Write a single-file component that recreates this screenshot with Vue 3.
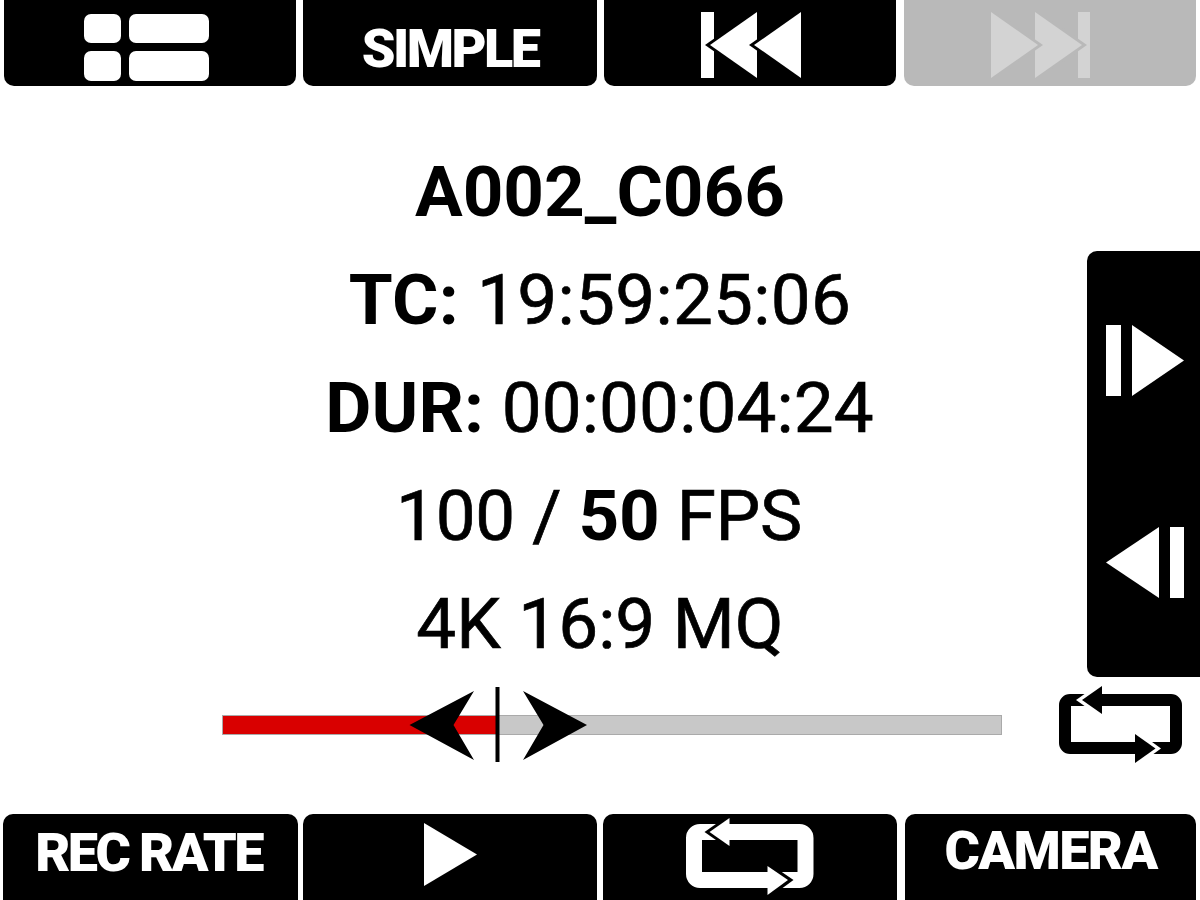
<script setup>
const progress = 35.2
</script>

<template>
  <div class="screen">
    <div class="top-row">
      <div class="btn top">
        <svg viewBox="4 0 292 86">
          <rect class="w" x="84" y="14" width="37" height="29" rx="7" />
          <rect class="w" x="129" y="14" width="80" height="29" rx="7" />
          <rect class="w" x="84" y="51" width="37" height="30" rx="7" />
          <rect class="w" x="129" y="51" width="80" height="30" rx="7" />
        </svg>
      </div>
      <div class="btn top label simple">SIMPLE</div>
      <div class="btn top">
        <svg viewBox="604 0 292 86">
          <rect class="w" x="701" y="12" width="13" height="66" />
          <polygon class="k" points="705,45 752,12 752,78" />
          <polygon class="w" points="710,45 757,12 757,78" />
          <polygon class="k" points="749,45 796,12 796,78" />
          <polygon class="w" points="754,45 801,12 801,78" />
        </svg>
      </div>
      <div class="btn top off">
        <svg viewBox="904 0 292 86">
          <rect class="d" x="1078" y="12" width="12" height="66" />
          <polygon class="g" points="1040,12 1087,45 1040,78" />
          <polygon class="d" points="1035,12 1082,45 1035,78" />
          <polygon class="g" points="996,12 1043,45 996,78" />
          <polygon class="d" points="991,12 1038,45 991,78" />
        </svg>
      </div>
    </div>

    <div class="middle">
      <div class="info">
        <div class="line"><b>A002_C066</b></div>
        <div class="line tc"><b>TC:</b> 19:59:25:06</div>
        <div class="line dur"><b>DUR:</b> 00:00:04:24</div>
        <div class="line fps">100 / <b>50</b> FPS</div>
        <div class="line">4K 16:9 MQ</div>
      </div>
      <div class="side">
        <svg viewBox="1087 251 113 426">
          <rect class="w" x="1106" y="325" width="15" height="71" />
          <polygon class="w" points="1132,325 1184,360.5 1132,396" />
          <polygon class="w" points="1106,562.5 1159,527 1159,598" />
          <rect class="w" x="1170" y="527" width="14" height="71" />
        </svg>
      </div>
    </div>

    <div class="scrub-row">
      <div class="track">
        <div class="fill" :style="{ width: progress + '%' }"></div>
        <svg class="thumb" viewBox="400 680 200 90">
          <polygon class="k" points="409.5,725 474,691 453.5,725 474,760" />
          <rect class="k" x="495.5" y="687" width="4" height="75" />
          <polygon class="k" points="523,691 587,725 523,760 543.5,725" />
        </svg>
      </div>
      <svg class="loop" viewBox="1059 684 124 80">
        <rect class="ring" x="1065" y="700" width="111" height="48" rx="5" />
        <polygon class="w" points="1076,700 1096,686 1096,714" />
        <polygon class="k" points="1082,700 1102,686 1102,714" />
        <polygon class="w" points="1161,748.5 1141,734 1141,763" />
        <polygon class="k" points="1155.5,748.5 1135,734 1135,763" />
      </svg>
    </div>

    <div class="bottom-row">
      <div class="btn bot label rec">REC RATE</div>
      <div class="btn bot">
        <svg viewBox="303 814 294 86">
          <polygon class="w" points="424,823 477,854.5 424,886" />
        </svg>
      </div>
      <div class="btn bot shift-a">
        <svg viewBox="603 814 294 86">
          <rect class="ring-w" x="694" y="832" width="111.5" height="48" rx="6" />
          <polygon class="k" points="704.5,832 724.5,818 724.5,846" />
          <polygon class="w" points="709.5,832 729.5,818 729.5,846" />
          <polygon class="k" points="793.5,880 773,866 773,895" />
          <polygon class="w" points="788,880 767.5,866 767.5,895" />
        </svg>
      </div>
      <div class="btn bot label camera shift-b">CAMERA</div>
    </div>
  </div>
</template>

<style>
html, body {
  margin: 0;
  background: #fff;
}
</style>

<style scoped>
.screen {
  width: 1200px;
  height: 900px;
  overflow: hidden;
  background: #fff;
  color: #000;
  font-family: Roboto, "Liberation Sans", sans-serif;
  display: flex;
  flex-direction: column;
}

.top-row {
  display: grid;
  grid-template-columns: 292px 294px 292px 293px;
  column-gap: 7px;
  padding-left: 4px;
  height: 86px;
}

.off {
  margin-left: 1px;
}

.bottom-row {
  display: grid;
  grid-template-columns: 295px 294px 295px 294px;
  column-gap: 5px;
  padding-left: 3px;
  height: 86px;
}

.shift-a {
  margin-left: 1px;
}

.shift-b {
  margin-left: 3px;
}

.btn {
  background: #000;
  color: #fff;
  overflow: hidden;
}

.off.btn {
  background: #b9b9b9;
}

.btn svg {
  display: block;
  width: 100%;
  height: 100%;
}

.top {
  border-radius: 0 0 10px 10px;
}

.bot {
  border-radius: 10px 10px 0 0;
}

.label {
  display: flex;
  justify-content: center;
  font-size: 54px;
  font-weight: 900;
  line-height: 60px;
}

.simple {
  padding-top: 19px;
  height: 67px;
  letter-spacing: -2.6px;
}

.rec {
  padding-top: 9px;
  padding-right: 4px;
  height: 77px;
  letter-spacing: -2.6px;
}

.camera {
  padding-top: 7px;
  height: 79px;
  letter-spacing: -1.6px;
}

.w {
  fill: #fff;
}

.k {
  fill: #000;
}

.d {
  fill: #d3d3d3;
}

.g {
  fill: #b9b9b9;
}

.ring {
  fill: none;
  stroke: #000;
  stroke-width: 12;
}

.ring-w {
  fill: none;
  stroke: #fff;
  stroke-width: 16;
}

.middle {
  display: grid;
  grid-template-columns: 113px 1fr 113px;
  height: 592px;
}

.info {
  grid-column: 2;
  padding-top: 52px;
  text-align: center;
  font-size: 71px;
  line-height: 108px;
  -webkit-text-stroke: 0.7px #000;
}

.info b {
  font-weight: 700;
  -webkit-text-stroke: 0;
}

.tc {
  letter-spacing: 0.3px;
}

.dur {
  letter-spacing: 0.1px;
  margin-left: -1px;
}

.fps {
  letter-spacing: -0.3px;
  margin-left: -2px;
}

.side {
  grid-column: 3;
  margin-top: 165px;
  height: 426px;
  background: #000;
  border-radius: 10px 0 0 10px;
}

.side svg {
  display: block;
  width: 100%;
  height: 100%;
}

.scrub-row {
  flex: 1;
  display: grid;
  grid-template-columns: 222px 780px 57px 124px;
}

.track {
  grid-column: 2;
  position: relative;
  box-sizing: border-box;
  height: 20px;
  margin-top: 37px;
  background: #c8c8c8;
  border: 1px solid #aaa;
}

.fill {
  height: 100%;
  background: #d90000;
}

.thumb {
  position: absolute;
  left: 177px;
  top: -36px;
  width: 200px;
  height: 90px;
}

.loop {
  grid-column: 4;
  display: block;
  width: 124px;
  height: 80px;
  margin-top: 6px;
}
</style>
